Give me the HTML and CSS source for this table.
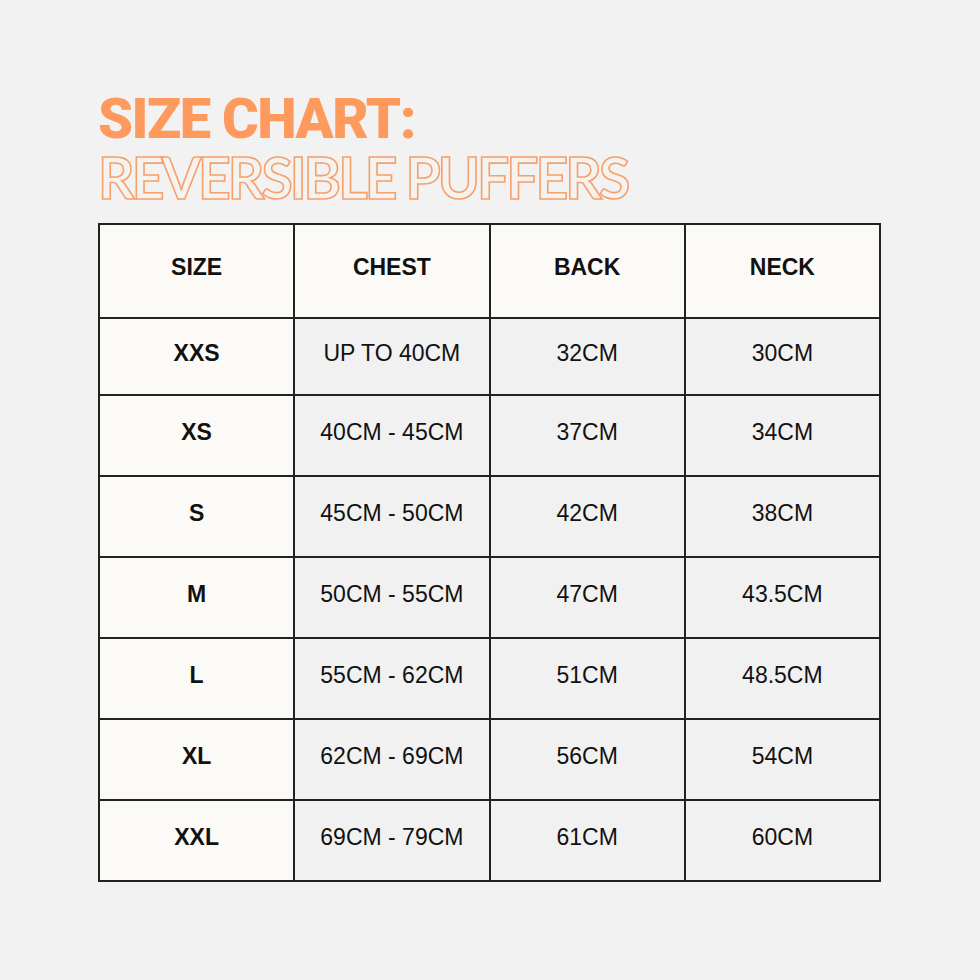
FILE: index.html
```html
<!DOCTYPE html>
<html>
<head>
<meta charset="utf-8">
<link rel="stylesheet" href="styles.css">
</head>
<body>
<div class="page">
  <h1 class="title">
    <span class="line1">SIZE CHART:</span>
    <span class="line2">REVERSIBLE PUFFERS</span>
  </h1>
  <table class="chart">
    <thead>
      <tr><th>SIZE</th><th>CHEST</th><th>BACK</th><th>NECK</th></tr>
    </thead>
    <tbody>
      <tr class="first"><th>XXS</th><td>UP TO 40CM</td><td>32CM</td><td>30CM</td></tr>
      <tr><th>XS</th><td>40CM - 45CM</td><td>37CM</td><td>34CM</td></tr>
      <tr><th>S</th><td>45CM - 50CM</td><td>42CM</td><td>38CM</td></tr>
      <tr><th>M</th><td>50CM - 55CM</td><td>47CM</td><td>43.5CM</td></tr>
      <tr><th>L</th><td>55CM - 62CM</td><td>51CM</td><td>48.5CM</td></tr>
      <tr><th>XL</th><td>62CM - 69CM</td><td>56CM</td><td>54CM</td></tr>
      <tr><th>XXL</th><td>69CM - 79CM</td><td>61CM</td><td>60CM</td></tr>
    </tbody>
  </table>
</div>
</body>
</html>
```
FILE: styles.css
```css
html, body {
  margin: 0;
  padding: 0;
  background: #f2f2f2;
}
.page {
  width: 980px;
  height: 980px;
  padding: 93px 0 0 98px;
  box-sizing: border-box;
}
.title {
  margin: 0;
  display: flex;
  flex-direction: column;
  color: #ff9a5e;
  font-size: 56px;
}
.line1 {
  font-family: "Roboto", sans-serif;
  font-weight: 900;
  letter-spacing: -1.5px;
  line-height: 52px;
  height: 52px;
}
.line2 {
  font-family: "Lato", sans-serif;
  font-weight: 700;
  font-size: 57px;
  line-height: 60px;
  height: 60px;
  margin-top: 2px;
  color: #f4f3f0;
  -webkit-text-stroke: 1.6px #f6a06c;
  letter-spacing: -3px;
}
.chart {
  margin-top: 16px;
  border-collapse: collapse;
  table-layout: fixed;
  width: 783px;
  font-family: "Liberation Sans", Arial, sans-serif;
  font-size: 23px;
  color: #111;
}
.chart th, .chart td {
  border: 2px solid #222;
  text-align: center;
  padding: 0 0 7px 0;
  height: 72px;
}
.chart thead th {
  height: 85px;
  background: #fbfaf6;
  font-weight: bold;
}
.chart tbody th {
  background: #fbfaf6;
  font-weight: bold;
}
.chart tbody tr.first th, .chart tbody tr.first td {
  height: 68px;
}
.chart td {
  background: #f1f1f1;
  font-weight: normal;
}
```
